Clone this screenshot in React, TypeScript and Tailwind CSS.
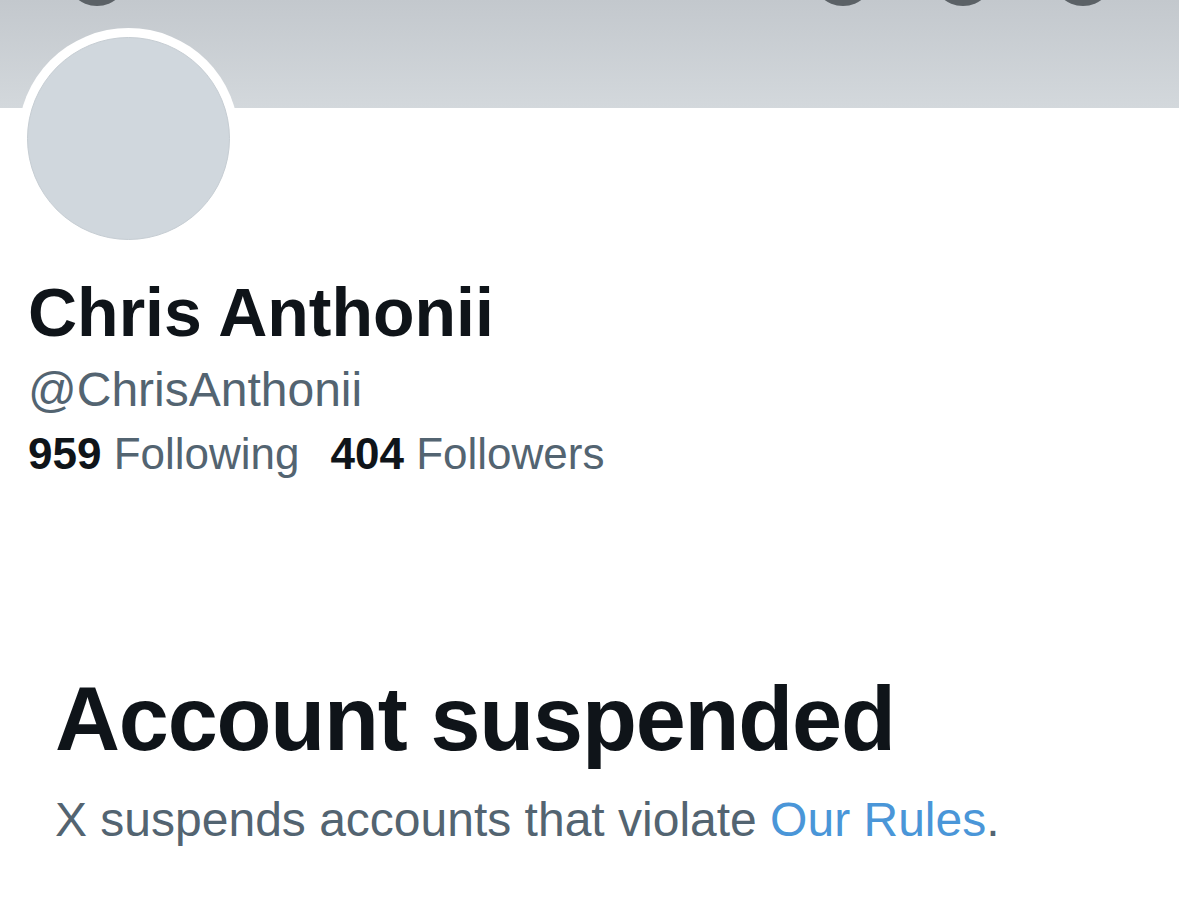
import React from 'react';

const App: React.FC = () => {
  return (
    <div className="w-[1179px] h-[910px] bg-white overflow-hidden" style={{ fontFamily: '"Liberation Sans", Arial, sans-serif' }}>
      {/* Banner */}
      <div className="relative h-[108px] bg-gradient-to-b from-[#c3c8cd] to-[#d3d8dc]">
        <div className="absolute left-[66px] top-[-56px] w-[62px] h-[62px] rounded-full bg-[#5b6166]" />
        <div className="absolute left-[812px] top-[-56px] w-[62px] h-[62px] rounded-full bg-[#5b6166]" />
        <div className="absolute left-[932px] top-[-56px] w-[62px] h-[62px] rounded-full bg-[#5b6166]" />
        <div className="absolute left-[1052px] top-[-56px] w-[62px] h-[62px] rounded-full bg-[#5b6166]" />
      </div>

      {/* Profile header */}
      <div className="px-[18px]">
        <div className="-mt-[80px] relative w-[221px] h-[221px] rounded-full bg-white flex items-center justify-center">
          <div className="w-[203px] h-[203px] rounded-full bg-[#d0d7dd] border border-[#c6cdd3]" />
        </div>
      </div>

      <div className="px-[28px] mt-[29px]">
        <h1 className="text-[68px] font-bold leading-none text-[#0f1419]">Chris Anthonii</h1>
        <p className="mt-[20px] text-[48px] leading-none text-[#536471]">@ChrisAnthonii</p>
        <div className="mt-[18px] flex items-baseline gap-[31px] text-[44px] leading-none">
          <span>
            <span className="font-bold text-[#0f1419]">959</span>
            <span className="text-[#536471]"> Following</span>
          </span>
          <span>
            <span className="font-bold text-[#0f1419]">404</span>
            <span className="text-[#536471]"> Followers</span>
          </span>
        </div>
      </div>

      {/* Suspended notice */}
      <div className="px-[55px] mt-[198px]">
        <h2 className="text-[90px] font-bold leading-none tracking-[-1.2px] text-[#0f1419]">Account suspended</h2>
        <p className="mt-[32px] text-[48px] leading-none text-[#536471]">
          X suspends accounts that violate <span className="text-[#4a96d8]">Our Rules</span>.
        </p>
      </div>
    </div>
  );
};

export default App;
